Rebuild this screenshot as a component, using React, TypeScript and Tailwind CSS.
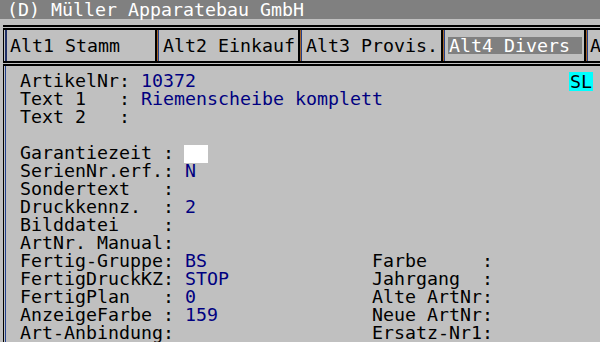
import React from 'react';

type Row = { label: string; value?: string; right?: string; box?: boolean };

const rows: Row[] = [
  { label: 'Text 1   : ', value: 'Riemenscheibe komplett' },
  { label: 'Text 2   :' },
  { label: '' },
  { label: 'Garantiezeit : ', box: true },
  { label: 'SerienNr.erf.: ', value: 'N' },
  { label: 'Sondertext   :' },
  { label: 'Druckkennz.  : ', value: '2' },
  { label: 'Bilddatei    :' },
  { label: 'ArtNr. Manual:' },
  { label: 'Fertig-Gruppe: ', value: 'BS', right: 'Farbe     :' },
  { label: 'FertigDruckKZ: ', value: 'STOP', right: 'Jahrgang  :' },
  { label: 'FertigPlan   : ', value: '0', right: 'Alte ArtNr:' },
  { label: 'AnzeigeFarbe : ', value: '159', right: 'Neue ArtNr:' },
  { label: 'Art-Anbindung:', right: 'Ersatz-Nr1:' },
];

const TabEdge = () => (
  <div className="flex shrink-0">
    <div className="w-[1px] bg-[#a8662a]" />
    <div className="w-[1px] bg-[#23408c]" />
  </div>
);

const App = () => {
  return (
    <div className="w-[600px] h-[342px] overflow-hidden bg-[#c0c0c0] font-['DejaVu_Sans_Mono',monospace] text-[18.27px] text-black">
      {/* Titelleiste */}
      <div className="h-[19px] bg-[#808080] pl-[7px] pt-[1px] leading-[18px] text-white whitespace-pre">
        (D) Müller Apparatebau GmbH
      </div>

      <div className="h-[6px]" />

      {/* Register-Leiste */}
      <div className="h-[2px] ml-[3px] bg-black" />
      <div className="h-[1px]" />
      <div className="h-[2px] ml-[3px] bg-black" />

      <div className="flex h-[31px]">
        <div className="ml-[3px] w-[1px] bg-black shrink-0" />
        <div className="w-[1px] shrink-0" />
        <div className="flex w-[152px] shrink-0">
          <div className="w-[2px] bg-[#1f2f66]" />
          <div className="flex-1 pl-[3px] pt-[7px] leading-[17px] whitespace-pre">Alt1 Stamm</div>
          <div className="w-[2px] bg-black" />
        </div>
        <div className="flex w-[143px] shrink-0">
          <TabEdge />
          <div className="flex-1 pl-[4px] pt-[7px] leading-[17px] whitespace-pre">Alt2 Einkauf</div>
          <div className="w-[2px] bg-black" />
        </div>
        <div className="flex w-[143px] shrink-0">
          <TabEdge />
          <div className="flex-1 pl-[4px] pt-[7px] leading-[17px] whitespace-pre">Alt3 Provis.</div>
          <div className="w-[2px] bg-black" />
        </div>
        <div className="flex w-[143px] shrink-0">
          <TabEdge />
          <div className="flex-1 pl-[3px] pt-[7px]">
            <div className="h-[17px] w-[134px] bg-[#808080] pl-[1px] leading-[17px] text-white whitespace-pre">Alt4 Divers</div>
          </div>
          <div className="w-[2px] bg-black" />
        </div>
        <div className="flex flex-1">
          <TabEdge />
          <div className="flex-1 pl-[2px] pt-[7px] leading-[17px] whitespace-pre">Alt5</div>
        </div>
      </div>

      <div className="h-[2px] ml-[3px] bg-black" />
      <div className="h-[1px]" />
      <div className="h-[2px] ml-[3px] bg-black" />

      {/* Inhalt */}
      <div className="flex h-[276px]">
        <div className="ml-[3px] w-[1px] bg-black shrink-0" />
        <div className="w-[1px] shrink-0" />
        <div className="w-[1px] bg-[#23408c] shrink-0" />
        <div className="relative flex-1 pl-[14px] pt-[6px] leading-[18px] whitespace-pre">
          <div className="h-[18px]">
            ArtikelNr: <span className="text-[#000080]">10372</span>
          </div>
          {rows.map((r, i) => (
            <div key={i} className="flex h-[18px]">
              <div className="w-[352px] shrink-0">
                {r.label}
                {r.value && <span className="text-[#000080]">{r.value}</span>}
                {r.box && <span className="inline-block align-top mt-[1px] -ml-[1px] w-[24px] h-[18px] bg-white" />}
              </div>
              {r.right && <div>{r.right}</div>}
            </div>
          ))}
          <div className="absolute right-[7px] top-[6px] h-[19px] w-[24px] bg-[#00ffff] pl-[1px] leading-[19px]">SL</div>
        </div>
      </div>
    </div>
  );
};

export default App;
